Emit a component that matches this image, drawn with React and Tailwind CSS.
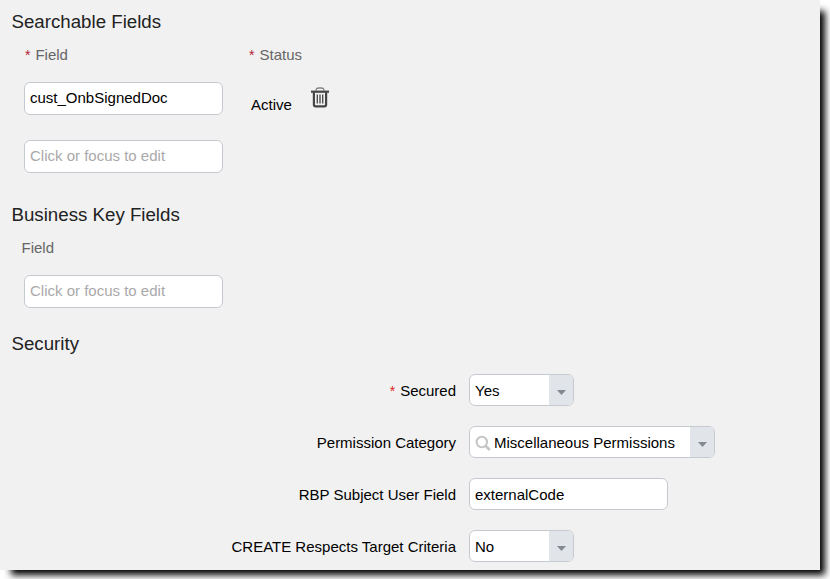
import React, { useState } from 'react'
import clsx from 'clsx'

function SectionTitle({ children }) {
  return <h2 className="text-[18.7px] leading-[22px] text-[#222]">{children}</h2>
}

function Required({ className }) {
  return <span className={clsx('mr-[5px] text-[14px]', className)}>*</span>
}

function TextField({ value, onChange, className }) {
  return (
    <input
      type="text"
      value={value}
      placeholder="Click or focus to edit"
      onChange={(e) => onChange(e.target.value)}
      className={clsx(
        'block w-[199px] rounded-md border border-[#c5cad0] bg-white pl-[5px] pr-2 text-black placeholder:text-[#a9a9a9] focus:outline-none',
        className
      )}
    />
  )
}

function SelectField({ value, search, className }) {
  return (
    <button
      type="button"
      className={clsx(
        'flex h-8 items-stretch overflow-hidden rounded-md border border-[#c5cad0] bg-white text-left text-black',
        className
      )}
    >
      <span className="flex flex-1 items-center pl-[5px] pt-0.5">
        {search && (
          <svg className="mr-[3px] h-4 w-4" viewBox="0 0 16 16" fill="none" stroke="#c6c6c6">
            <circle cx="6.8" cy="7" r="5.2" strokeWidth="2.1" />
            <path d="M10.5 10.8L14.8 15" strokeWidth="2.8" />
          </svg>
        )}
        {value}
      </span>
      <span className="flex w-6 items-center justify-center bg-[#e1e5e9]">
        <svg className="mt-[5px] h-[5px] w-[9px]" viewBox="0 0 9 5" fill="#82898f">
          <path d="M0 0H9L4.5 5Z" />
        </svg>
      </span>
    </button>
  )
}

function TrashIcon() {
  return (
    <svg className="h-[22px] w-[19px]" viewBox="0 0 19 22" fill="none" stroke="#454545">
      <path d="M5 4.5Q5.3 2 7.5 2H10.5Q12.7 2 13 4.5" stroke="#888" strokeWidth="1.4" />
      <path d="M0 5.7H18" strokeWidth="2.2" />
      <path d="M2.9 6.5V18.5Q2.9 20.3 4.5 20.3H13.5Q15.1 20.3 15.1 18.5V6.5" strokeWidth="2.2" />
      <path d="M6.3 8.5V17.5M9 8.5V17.5M11.7 8.5V17.5" strokeWidth="1.3" />
    </svg>
  )
}

function FormRow({ label, required, children }) {
  return (
    <div className="flex h-8 items-center gap-[13px]">
      <label className="w-[456px] pt-0.5 text-right text-black">
        {required && <Required className="text-[#e02020]" />}
        {label}
      </label>
      {children}
    </div>
  )
}

export default function App() {
  const [fields, setFields] = useState(['cust_OnbSignedDoc', ''])
  const [keyField, setKeyField] = useState('')
  const [subjectField, setSubjectField] = useState('externalCode')

  const updateField = (index, value) => {
    setFields(fields.map((f, i) => (i === index ? value : f)))
  }

  return (
    <div className="h-[579px] w-[830px] overflow-hidden bg-white font-['Liberation_Sans',Arial,sans-serif] text-[15px] leading-[18px]">
      <div className="h-[570px] w-[820px] bg-[#f1f1f1] pt-[11px] shadow-[8px_8px_7px_-3px_#000]">
        {/* Searchable fields */}
        <section className="pl-[11.5px]">
          <SectionTitle>Searchable Fields</SectionTitle>
          <div className="mt-[13px] flex pl-[13.5px] text-[#666]">
            <div className="w-56"><Required className="text-[#b3202c]" />Field</div>
            <div><Required className="text-[#b3202c]" />Status</div>
          </div>
          <div className="mt-[18px] flex items-start pl-[12.5px]">
            <TextField value={fields[0]} onChange={(v) => updateField(0, v)} className="h-[33px] pb-0.5" />
            <span className="ml-7 mt-[14px] w-[60px] text-black">Active</span>
            <button type="button" title="Delete" className="mt-1">
              <TrashIcon />
            </button>
          </div>
          <div className="mt-[25px] pl-[12.5px]">
            <TextField value={fields[1]} onChange={(v) => updateField(1, v)} className="h-[33px] pb-0.5" />
          </div>
        </section>

        {/* Business key */}
        <section className="mt-[31px] pl-[11.5px]">
          <SectionTitle>Business Key Fields</SectionTitle>
          <div className="mt-[13px] pl-[10px] text-[#666]">Field</div>
          <div className="mt-[18px] pl-[12.5px]">
            <TextField value={keyField} onChange={setKeyField} className="h-[33px] pb-0.5" />
          </div>
        </section>

        {/* Security */}
        <section className="mt-[25px]">
          <div className="pl-[11.5px]">
            <SectionTitle>Security</SectionTitle>
          </div>
          <div className="mt-[19px] flex flex-col gap-5">
            <FormRow label="Secured" required>
              <SelectField value="Yes" className="w-[105px]" />
            </FormRow>
            <FormRow label="Permission Category">
              <SelectField value="Miscellaneous Permissions" search className="w-[246px]" />
            </FormRow>
            <FormRow label="RBP Subject User Field">
              <TextField value={subjectField} onChange={setSubjectField} className="h-8" />
            </FormRow>
            <FormRow label="CREATE Respects Target Criteria">
              <SelectField value="No" className="w-[105px]" />
            </FormRow>
          </div>
        </section>
      </div>
    </div>
  )
}
